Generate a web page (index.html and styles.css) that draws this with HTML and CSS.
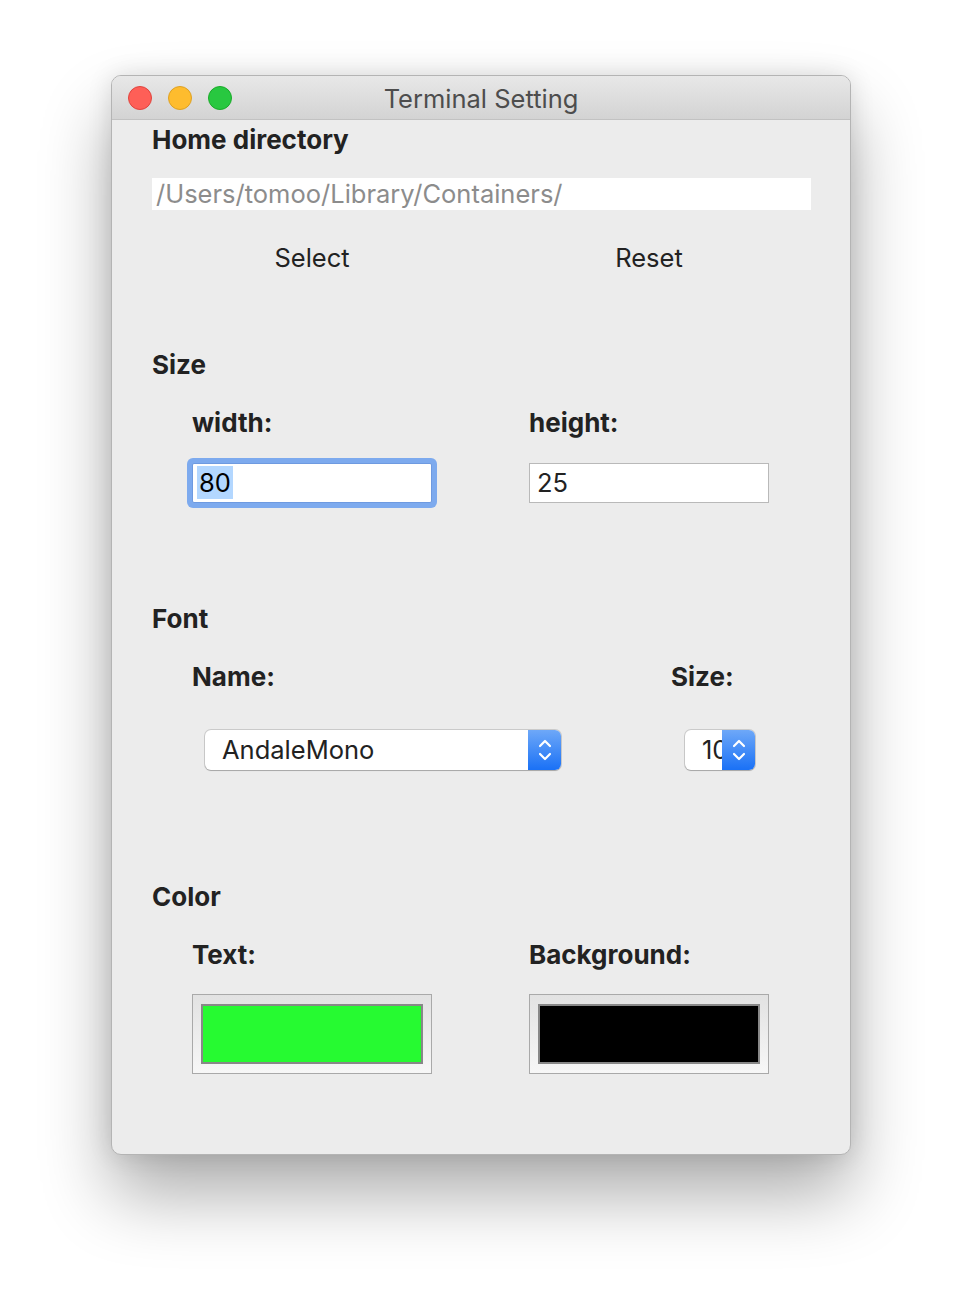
FILE: index.html
```html
<!DOCTYPE html>
<html>
<head>
<meta charset="utf-8">
<link rel="stylesheet" href="styles.css">
</head>
<body>
<div class="window">
  <div class="titlebar">
    <div class="lights">
      <span class="light red"></span>
      <span class="light yellow"></span>
      <span class="light green"></span>
    </div>
    <div class="title">Terminal Setting</div>
  </div>
  <div class="content">
    <div class="section-title first">Home directory</div>
    <div class="path">/Users/tomoo/Library/Containers/</div>
    <div class="pair buttons">
      <div class="btn">Select</div>
      <div class="btn">Reset</div>
    </div>

    <div class="section-title size-title">Size</div>
    <div class="pair labels">
      <div class="label">width:</div>
      <div class="label">height:</div>
    </div>
    <div class="pair fields">
      <div class="field focused"><span class="sel">80</span></div>
      <div class="field">25</div>
    </div>

    <div class="section-title font-title">Font</div>
    <div class="font-labels">
      <div class="label">Name:</div>
      <div class="label">Size:</div>
    </div>
    <div class="font-controls">
      <div class="popup name-popup">
        <span class="popup-text">AndaleMono</span>
        <span class="stepper">
          <svg width="16" height="26" viewBox="0 0 16 26"><path d="M3 9 L8 4 L13 9 M3 17 L8 22 L13 17" fill="none" stroke="#fff" stroke-width="2.2" stroke-linecap="round" stroke-linejoin="round"/></svg>
        </span>
      </div>
      <div class="popup size-popup">
        <span class="popup-text">10</span>
        <span class="stepper">
          <svg width="16" height="26" viewBox="0 0 16 26"><path d="M3 9 L8 4 L13 9 M3 17 L8 22 L13 17" fill="none" stroke="#fff" stroke-width="2.2" stroke-linecap="round" stroke-linejoin="round"/></svg>
        </span>
      </div>
    </div>

    <div class="section-title color-title">Color</div>
    <div class="pair labels">
      <div class="label">Text:</div>
      <div class="label">Background:</div>
    </div>
    <div class="pair wells">
      <div class="well"><div class="swatch green-swatch"></div></div>
      <div class="well"><div class="swatch black-swatch"></div></div>
    </div>
  </div>
</div>
</body>
</html>
```

FILE: styles.css
```css
* { box-sizing: border-box; }
html, body { margin: 0; padding: 0; background: #ffffff; }
body {
  font-family: "Inter", "Roboto", "Liberation Sans", sans-serif;
  width: 962px;
  height: 1302px;
  overflow: hidden;
}
.window {
  margin: 75px 0 0 111px;
  width: 740px;
  height: 1080px;
  background: #ececec;
  border: 1px solid #b4b4b4;
  border-radius: 10px;
  overflow: hidden;
  box-shadow: 0 40px 70px rgba(0,0,0,0.32), 0 0 24px rgba(0,0,0,0.12);
}
.titlebar {
  height: 44px;
  background: linear-gradient(#e8e8e8, #d3d3d3);
  border-bottom: 1px solid #c2c2c2;
  display: flex;
  align-items: center;
  position: relative;
}
.lights {
  display: flex;
  gap: 16px;
  padding-left: 16px;
}
.light {
  width: 24px;
  height: 24px;
  border-radius: 50%;
  display: block;
}
.red { background: #fe5f57; border: 1px solid #e0443e; }
.yellow { background: #febc2e; border: 1px solid #dea123; }
.green { background: #28c840; border: 1px solid #1aab29; }
.title {
  position: absolute;
  left: 0; right: 0; top: 0; bottom: 0;
  display: flex;
  align-items: center;
  justify-content: center;
  font-size: 25.5px;
  color: #4d4d4d;
  padding-top: 2px;
}
.content {
  padding: 0 39px 0 40px;
  color: #222;
}
.section-title {
  font-size: 26px;
  font-weight: 700;
  height: 32px;
  line-height: 32px;
  color: #222;
}
.first { margin-top: 4px; }
.path {
  margin-top: 22px;
  height: 32px;
  background: #fff;
  font-size: 25.5px;
  line-height: 32px;
  color: #8c8c8c;
  padding-left: 4px;
}
.pair {
  display: grid;
  grid-template-columns: 240px 240px;
  column-gap: 97px;
  padding-left: 40px;
}
.buttons { margin-top: 28px; }
.btn {
  height: 40px;
  line-height: 40px;
  text-align: center;
  font-size: 25.5px;
  color: #222;
}
.size-title { margin-top: 71px; }
.labels { margin-top: 26px; }
.label {
  font-size: 26px;
  font-weight: 700;
  height: 32px;
  line-height: 32px;
  color: #222;
}
.fields { margin-top: 24px; }
.field {
  height: 40px;
  background: #fff;
  border: 1px solid #b9b9b9;
  font-size: 25.5px;
  line-height: 38px;
  padding-left: 7px;
  color: #222;
}
.field.focused {
  border: 1px solid #6e9ae0;
  box-shadow: 0 0 0 5px #7daaee;
  border-radius: 2px;
  padding-left: 4px;
}
.sel {
  background: #b3d7ff;
  display: inline-block;
  line-height: 33px;
  padding: 0 2px;
  color: #000;
}
.font-title { margin-top: 100px; }
.font-labels {
  margin-top: 26px;
  display: flex;
  padding-left: 40px;
}
.font-labels .label:first-child { width: 479px; }
.font-controls {
  margin-top: 37px;
  display: flex;
  align-items: center;
  padding-left: 53px;
}
.popup {
  height: 40px;
  background: #fff;
  border-radius: 6px;
  box-shadow: 0 0 0 1px rgba(0,0,0,0.14), 0 1px 1px rgba(0,0,0,0.18);
  display: flex;
  overflow: hidden;
}
.name-popup { width: 356px; }
.size-popup { width: 70px; margin-left: 124px; }
.popup-text {
  flex: 1;
  font-size: 25.5px;
  line-height: 40px;
  color: #222;
  padding-left: 17px;
  overflow: hidden;
  white-space: nowrap;
}
.size-popup .popup-text { padding-left: 17px; }
.stepper {
  width: 33px;
  flex: none;
  background: linear-gradient(#6ea8f8, #1a71f6);
  display: flex;
  align-items: center;
  justify-content: center;
}
.color-title { margin-top: 111px; }
.wells { margin-top: 23px; }
.well {
  height: 80px;
  border: 1px solid #a9a9a9;
  background: linear-gradient(#e2e2e2, #f7f7f7);
  padding: 9px 8px;
}
.swatch {
  height: 60px;
  border: 2px solid #888;
}
.green-swatch { background: #26fa31; }
.black-swatch { background: #000; }
```
